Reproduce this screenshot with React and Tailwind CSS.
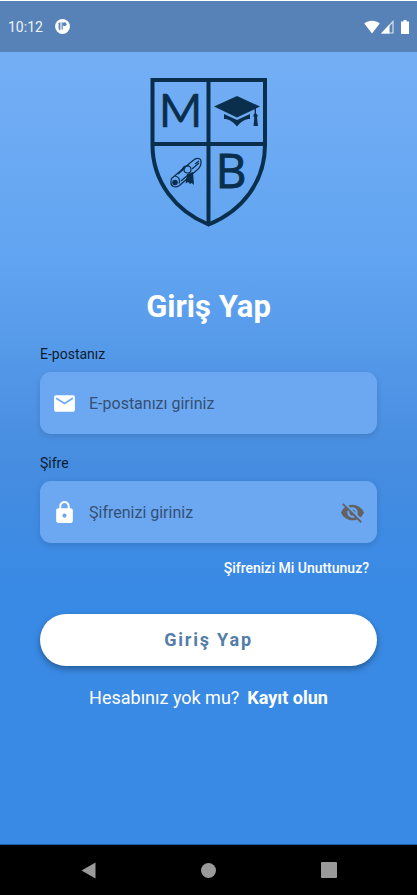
import React from "react";

function StatusBar() {
  return (
    <header className="flex h-[52px] items-center justify-between border-t border-white bg-black/25 px-2 text-white">
      <div className="flex items-center gap-3">
        <time className="text-sm leading-5 text-white/90">10:12</time>
        <svg className="size-[15px]" viewBox="0 0 15 15" aria-hidden="true">
          <circle cx="7.5" cy="7.5" r="7.4" fill="#fff" />
          <path d="M3.6 4.2Q4.400 3 5.400 3.200V11.800Q4 11 3.600 9.500z" fill="#5683b8" />
          <path d="M7.200 3.200V10.500" stroke="#5683b8" strokeWidth="1.200" />
          <circle cx="9.600" cy="5.200" r="1.900" fill="#5683b8" />
        </svg>
      </div>
      <div className="flex items-center">
        <svg className="mr-px h-[14px] w-4" viewBox="0 0 16 14" aria-hidden="true">
          <path d="M.3 3.6C4.5-.2 11.5-.2 15.7 3.6L8 13.5z" fill="#fff" />
        </svg>
        <svg className="mr-[7px] h-[14px] w-[13px]" viewBox="0 0 13 14" aria-hidden="true">
          <path d="M1.5 13L12 1.5V13z" fill="none" stroke="#fff" strokeOpacity=".75" strokeWidth="1.2" />
          <path d="M0 13.6L8.5 4.5V13.6z" fill="#fff" />
        </svg>
        <svg className="h-[14px] w-2" viewBox="0 0 8 14" aria-hidden="true">
          <path d="M2.500 0h3v1.500H8V14H0V1.500h2.500z" fill="#fff" />
        </svg>
      </div>
    </header>
  );
}

function Crest() {
  return (
    <svg className="h-[150px] w-[118px]" viewBox="0 0 118 150" role="img" aria-label="MB">
      <g fill="none" stroke="#0a2f4d" strokeWidth="4">
        <path d="M2.5 3H115V68C115 105 92 134 58.500 147.500C26 134 2.500 105 2.500 68z" />
        <path d="M58.500 3V147M2.500 67H115" />
      </g>
      <g fill="#0a2f4d" stroke="#0a2f4d">
        <text x="30.500" y="49.500" textAnchor="middle" fontSize="47" strokeWidth=".3" className="font-[Lato,sans-serif]">
          M
        </text>
        <text x="81" y="110.500" textAnchor="middle" fontSize="48" strokeWidth=".9" className="font-['Open_Sans',sans-serif]">
          B
        </text>
      </g>
      <g fill="#0a2f4d">
        <path d="M64 29.500L87 19l23 10.500L87 40.500z" />
        <path d="M74 37L87 43l13-6v5C95 42 91 44.500 87 49.500C83 44.500 79 42 74 42z" />
        <path d="M104.600 31h1.400v5.500a2.500 2.500 0 0 1 1 4l1 8.500h-4.500l.8-8.500a2.500 2.500 0 0 1 .3-4z" />
      </g>
      <g fill="none" stroke="#0a2f4d" strokeWidth="1.200" strokeLinejoin="round">
        <path d="M21.500 101.500L43 83.500C47 80 51.500 81 51 85.500C51 89 49.500 91 47 93L29.500 108.500C25 111.500 20.500 109.500 21 105C21 103.500 21 102.500 21.500 101.500z" />
        <path d="M25 99C29 99.500 30.500 103 29 106.500M28 97L35 91M31 104l7-6M45 87l4-3M42 92l7-6" />
        <circle cx="25" cy="105.500" r="2.200" fill="#0a2f4d" />
        <circle cx="37.500" cy="92.500" r="3.500" />
        <path d="M31 94l3-4.500 5-1" />
      </g>
      <path d="M37 97l6-2 1 13-2.500-2-1.500 1-2-2-2.500 1.500z" fill="#0a2f4d" />
    </svg>
  );
}

function Field({ id, label, icon, type, placeholder, action }) {
  return (
    <div>
      <label htmlFor={id} className="block text-sm leading-5 text-[#0c1c30]">
        {label}
      </label>
      <div className="mt-2 flex h-[62px] items-center rounded-[11px] bg-[#6ca8f1] px-3 shadow-[0_2px_6px_rgba(0,0,0,0.13)]">
        {icon}
        <input
          id={id}
          type={type}
          placeholder={placeholder}
          className="ml-3 h-full min-w-0 flex-1 bg-transparent text-base text-[#13233a] outline-none placeholder:text-[#345074]"
        />
        {action}
      </div>
    </div>
  );
}

function NavBar() {
  return (
    <nav className="flex h-[51px] items-center justify-around border-t border-[#1d5da6] bg-black px-7 text-[#9a9a9a]">
      <button type="button" aria-label="Geri" className="flex w-10 justify-center">
        <svg className="h-[17px] w-[15px]" viewBox="0 0 15 17">
          <path d="M14.5.5v16L.5 8.5z" fill="currentColor" />
        </svg>
      </button>
      <button type="button" aria-label="Ana ekran" className="flex w-10 justify-center">
        <span className="size-[15px] rounded-full bg-[#9a9a9a]" />
      </button>
      <button type="button" aria-label="Son uygulamalar" className="flex w-10 justify-center">
        <span className="size-4 rounded-[1px] bg-[#9a9a9a]" />
      </button>
    </nav>
  );
}

export default function App() {
  return (
    <div className="flex min-h-screen flex-col bg-[#398ae5] bg-[linear-gradient(to_bottom,#73aef5_65px,#61a4f1_260px,#478de0_455px,#398ae5_585px)] font-[Roboto,sans-serif]">
      <StatusBar />
      <main className="flex flex-1 flex-col px-10 pt-[25px]">
        <div className="flex justify-center">
          <Crest />
        </div>
        <h1 className="mt-[60px] text-center text-[31px] font-bold leading-10 text-white">Giriş Yap</h1>
        <form className="mt-[17px] flex flex-col" onSubmit={(e) => e.preventDefault()}>
          <div className="flex flex-col gap-[19px]">
            <Field
              id="email"
              label="E-postanız"
              type="email"
              placeholder="E-postanızı giriniz"
              icon={
                <svg className="size-[25px] shrink-0 fill-white" viewBox="0 0 24 24" aria-hidden="true">
                  <path d="M20 4H4c-1.100 0-1.990.9-1.990 2L2 18c0 1.100.9 2 2 2h16c1.100 0 2-.9 2-2V6c0-1.100-.9-2-2-2zm0 4l-8 5-8-5V6l8 5 8-5v2z" />
                </svg>
              }
            />
            <Field
              id="password"
              label="Şifre"
              type="password"
              placeholder="Şifrenizi giriniz"
              icon={
                <svg className="size-[25px] shrink-0 fill-white" viewBox="0 0 24 24" aria-hidden="true">
                  <path d="M18 8h-1V6c0-2.760-2.240-5-5-5S7 3.240 7 6v2H6c-1.100 0-2 .9-2 2v10c0 1.100.9 2 2 2h12c1.100 0 2-.9 2-2V10c0-1.100-.9-2-2-2zm-6 9c-1.100 0-2-.9-2-2s.9-2 2-2 2 .9 2 2-.9 2-2 2zm3.100-9H8.900V6c0-1.710 1.390-3.100 3.100-3.100 1.710 0 3.100 1.390 3.100 3.100v2z" />
                </svg>
              }
              action={
                <button type="button" aria-label="Şifreyi göster">
                  <svg className="size-[25px] fill-[#626262]" viewBox="0 0 24 24">
                    <path d="M12 7c2.760 0 5 2.240 5 5 0 .65-.13 1.260-.36 1.830l2.920 2.920c1.510-1.260 2.700-2.890 3.430-4.750-1.730-4.390-6-7.500-11-7.500-1.400 0-2.740.25-3.980.7l2.160 2.160C10.740 7.130 11.350 7 12 7zM2 4.270l2.280 2.280.46.46C3.080 8.300 1.780 10.020 1 12c1.730 4.390 6 7.500 11 7.500 1.550 0 3.030-.3 4.380-.84l.42.42L19.730 22 21 20.730 3.270 3 2 4.270zM7.530 9.800l1.550 1.550c-.05.21-.08.43-.08.65 0 1.660 1.340 3 3 3 .22 0 .44-.03.65-.08l1.550 1.550c-.67.33-1.410.53-2.200.53-2.760 0-5-2.240-5-5 0-.79.2-1.530.53-2.200zm4.310-.78l3.150 3.150.02-.16c0-1.660-1.340-3-3-3l-.17.01z" />
                  </svg>
                </button>
              }
            />
          </div>
          <a href="#sifre" className="mr-2 mt-[15px] self-end text-sm font-medium leading-5 text-white">
            Şifrenizi Mi Unuttunuz?
          </a>
          <button
            type="submit"
            className="mt-9 h-[52px] rounded-full bg-white text-lg font-bold tracking-widest text-[#527daa] shadow-[0_3px_6px_rgba(0,0,0,0.35)]"
          >
            Giriş Yap
          </button>
        </form>
        <p className="mt-5 text-center text-lg leading-6 text-white">
          <span className="mr-2">Hesabınız yok mu?</span>
          <a href="#kayit" className="font-bold">
            Kayıt olun
          </a>
        </p>
      </main>
      <NavBar />
    </div>
  );
}
